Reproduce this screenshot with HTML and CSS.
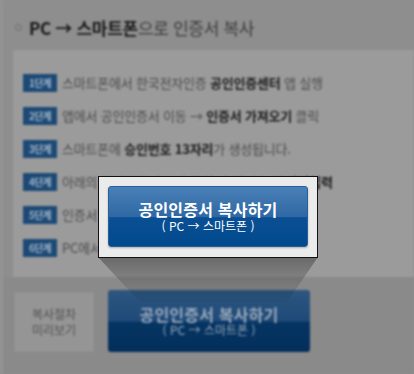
FILE: index.html
```html
<!DOCTYPE html>
<html lang="ko">
<head>
<meta charset="utf-8">
<title>PC → 스마트폰으로 인증서 복사</title>
<link rel="stylesheet" href="styles.css">
</head>
<body>
<div class="page">
  <div class="bg">
    <h1 class="title"><span class="dot"></span><b>PC → 스마트폰</b>으로 인증서 복사</h1>
    <div class="panel">
      <div class="step"><span class="badge">1단계</span><span>스마트폰에서 한국전자인증 <b>공인인증센터</b> 앱 실행</span></div>
      <div class="step"><span class="badge">2단계</span><span>앱에서 공인인증서 이동 → <b>인증서 가져오기</b> 클릭</span></div>
      <div class="step"><span class="badge">3단계</span><span>스마트폰에 <b>승인번호 13자리</b>가 생성됩니다.</span></div>
      <div class="step"><span class="badge">4단계</span><span>아래의 공인인증서 복사 클릭, 승인번호 <b>13자리입력</b></span></div>
      <div class="step"><span class="badge">5단계</span><span>인증서 선택 후 비밀번호 입력, <b>확인 선택</b></span></div>
      <div class="step"><span class="badge">6단계</span><span>PC에서 인증서 복사 완료</span></div>
    </div>
    <div class="bottom">
      <div class="preview">복사절차<br>미리보기</div>
      <div class="copy-btn dim"><span class="main">공인인증서 복사하기</span><span class="sub">( PC → 스마트폰 )</span></div>
    </div>
  </div>
  <div class="cone"></div>
  <div class="popup">
    <div class="copy-btn lit"><span class="main">공인인증서 복사하기</span><span class="sub">( PC → 스마트폰 )</span></div>
  </div>
</div>
</body>
</html>
```
FILE: styles.css
```css
* { box-sizing: border-box; }
html, body { margin: 0; padding: 0; }
body {
  background: #8e8e8e;
  font-family: "Noto Sans CJK KR", "Noto Sans", sans-serif;
}
.page {
  position: relative;
  width: 414px;
  height: 374px;
  overflow: hidden;
}
.bg {
  filter: blur(0.9px);
  height: 374px;
  border-left: 3px solid #949494;
}
.title {
  margin: 0;
  height: 50px;
  padding: 5px 0 0 12px;
  display: flex;
  align-items: center;
  font-size: 17px;
  font-weight: 400;
  color: #3c3c3c;
  letter-spacing: -0.3px;
}
.title b { color: #1a1a1a; font-weight: 700; }
.dot {
  width: 7px;
  height: 7px;
  border: 1px solid #6c6c6c;
  border-radius: 50%;
  margin-right: 7px;
}
.panel {
  margin-left: 10px;
  height: 227px;
  background: #9b9b9b;
  padding: 16px 0 0 10px;
}
.step {
  height: 33px;
  display: flex;
  align-items: center;
  gap: 5px;
  font-size: 13px;
  color: #4c4c4c;
  letter-spacing: -0.2px;
}
.step b { color: #1c1c1c; font-weight: 700; }
.badge {
  width: 34px;
  height: 18px;
  background: #1d4a75;
  color: #9fb1c6;
  font-size: 10px;
  font-weight: 700;
  display: flex;
  align-items: center;
  justify-content: center;
  letter-spacing: -0.8px;
}
.bottom {
  display: flex;
  align-items: flex-start;
  gap: 14px;
  padding: 13px 0 0 11px;
  height: 97px;
  background: #8a8a8a;
}
.preview {
  margin-top: 2px;
  width: 80px;
  height: 60px;
  background: #959595;
  border: 1px solid #909090;
  display: flex;
  align-items: center;
  justify-content: center;
  text-align: center;
  font-size: 12px;
  line-height: 16px;
  color: #505050;
}
.copy-btn {
  width: 202px;
  height: 62px;
  border-radius: 3px;
  display: flex;
  flex-direction: column;
  align-items: center;
  justify-content: center;
  line-height: 1.15;
}
.copy-btn .main { font-size: 16px; font-weight: 700; letter-spacing: 0.2px; }
.copy-btn .sub { font-size: 12px; margin-top: 0; }
.copy-btn.dim {
  background: linear-gradient(#2d5680 0%, #1f4a78 50%, #063563 52%, #032e5b 100%);
  color: #9aa9bb;
}
.copy-btn.lit {
  width: 200px;
  height: 61px;
  border: 1px solid #2a5e96;
  background: linear-gradient(#4a80b7 0%, #2f68a4 50%, #0a4f94 52%, #004b8d 100%);
  color: #ffffff;
  box-shadow: 0 1px 2px rgba(0,0,0,0.25);
}
.popup {
  position: absolute;
  left: 98px;
  top: 176px;
  width: 220px;
  height: 82px;
  background: #ebebeb;
  border: 1px solid #111;
  padding: 9px;
}
.cone {
  position: absolute;
  left: 98px;
  top: 257px;
  width: 220px;
  height: 45px;
  clip-path: polygon(0 0, 100% 0, 86% 100%, 19% 100%);
  background: linear-gradient(rgba(0,0,0,0.32), rgba(0,0,0,0.14) 55%, rgba(0,0,0,0.04));
}
```
